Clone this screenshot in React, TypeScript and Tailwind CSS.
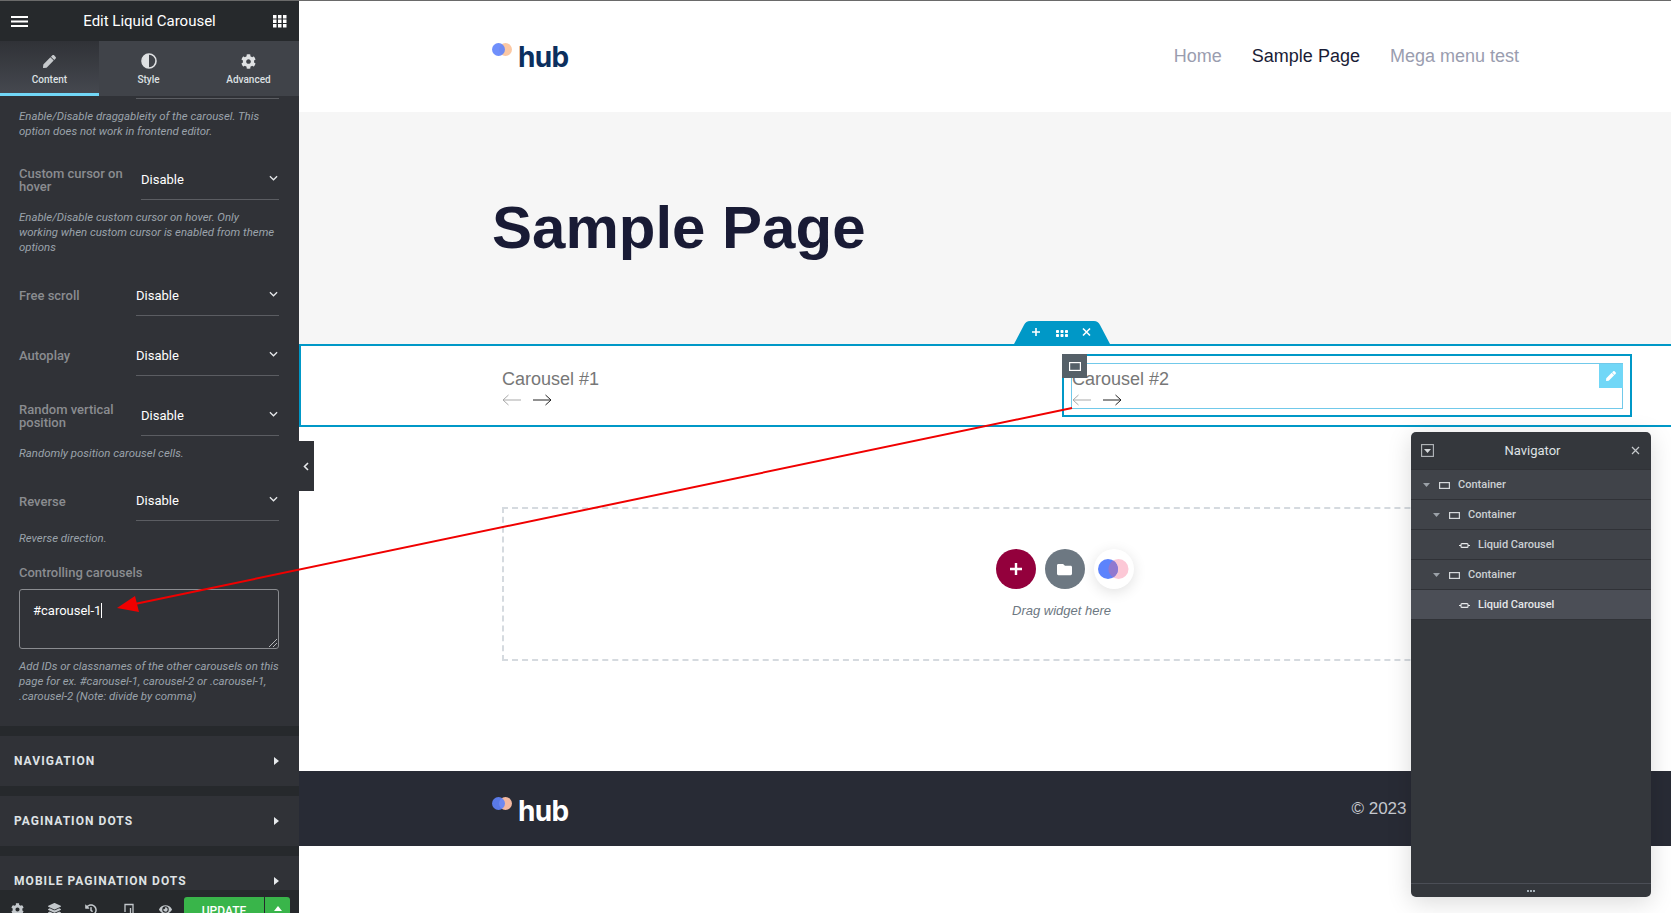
import React from "react";
import { FaPen, FaCog, FaLayerGroup, FaHistory, FaEye, FaFolder } from "react-icons/fa";

const Desc = ({ children, className = "" }: { children: React.ReactNode; className?: string }) => (
  <p className={`mx-[19px] shrink-0 text-[11.4px] leading-[15px] italic text-[#9ba3ab] ${className}`}>{children}</p>
);

const Chevron = () => (
  <svg width="9" height="6" viewBox="0 0 10 6" className="mb-[3px]" fill="none" stroke="#e6e8ea" strokeWidth="1.4">
    <path d="M1 1l4 4 4-4" />
  </svg>
);

const Row = ({ label, start, mt, lift }: { label: React.ReactNode; start: number; mt: string; lift?: boolean }) => (
  <div className={`flex h-10 shrink-0 pl-[19px] pr-5 items-center ${mt}`}>
    <div className={`shrink-0 text-[13px] leading-[13px] font-medium text-[#8a8c90] ${lift ? "pb-[2px]" : ""}`} style={{ width: start - 19 }}>{label}</div>
    <div className="flex-1 h-full border-b border-[#5b5d62] flex items-center justify-between pr-px">
      <span className="text-[13px] text-white">Disable</span>
      <Chevron />
    </div>
  </div>
);

const Accordion = ({ title, last }: { title: string; last?: boolean }) => (
  <>
    <div className="h-[10px] bg-[#26292c] shrink-0" />
    <div className={`${last ? "h-[34px] pt-[18px] items-start" : "h-[50px] items-center"} shrink-0 pl-[14px] pr-[20px] flex justify-between`}>
      <span className="text-[12px] leading-[15px] font-bold tracking-[1.05px] text-[#dfe2e5]">{title}</span>
      <svg width="5" height="8" viewBox="0 0 5 8" className={last ? "mt-[3px]" : ""}><path d="M0 0l5 4-5 4z" fill="#e6e9ec" /></svg>
    </div>
  </>
);

const Tab = ({ icon, label, active, className }: { icon: React.ReactNode; label: string; active?: boolean; className: string }) => (
  <div className={`${className} h-full flex flex-col items-center pt-[12px] ${active ? "bg-gradient-to-b from-[#303237] to-[#45484f] border-b-[3px] border-[#71d7f7]" : ""}`}>
    <div className="h-[16px] flex items-center justify-center">{icon}</div>
    <span className="text-[10px] leading-[12px] mt-[5px] font-medium text-[#dde0e3]">{label}</span>
  </div>
);

const Logo = ({ color, second }: { color: string; second: string }) => (
  <div className="flex items-start">
    <svg width="20" height="13" viewBox="0 0 20 13" className="mt-[3px]">
      <circle cx="13.500" cy="6.500" r="6.500" fill={second} />
      <circle cx="6.500" cy="6.500" r="6.500" fill="#5f83fb" fillOpacity="0.9" />
    </svg>
    <span className="text-[28px] leading-[34px] font-bold tracking-[-0.7px] ml-[6px] font-['Inter',sans-serif]" style={{ color }}>hub</span>
  </div>
);

const Arrows = () => (
  <div className="flex gap-[10px] mt-[5px]">
    <svg width="20" height="12" viewBox="0 0 20 12" fill="none" stroke="#a9a9a9" strokeWidth="1"><path d="M19 6H1M6.500 1L1 6l5.500 5" /></svg>
    <svg width="20" height="12" viewBox="0 0 20 12" fill="none" stroke="#222" strokeWidth="1"><path d="M1 6h18M13.500 1L19 6l-5.500 5" /></svg>
  </div>
);

const NavRow = ({ depth, label, kind, selected }: { depth: number; label: string; kind: "c" | "w"; selected?: boolean }) => (
  <div className={`h-[30px] shrink-0 pt-px border-b border-[#303237] flex items-center text-[11px] font-medium ${selected ? "bg-[#4b4e56] text-[#e6e8ea]" : "bg-[#404349] text-[#ccd0d4]"}`} style={{ paddingLeft: 12 + depth * 10 }}>
    {kind === "c" ? (
      <>
        <svg width="7" height="4" viewBox="0 0 7 4" className="mr-[9px]"><path d="M0 0h7L3.500 4z" fill="#9ba1a8" /></svg>
        <svg width="11" height="7" viewBox="0 0 11 7" fill="none" stroke="#d5d8db" strokeWidth="1.200" className="mr-[8px]"><rect x="0.600" y="0.600" width="9.800" height="5.800" /></svg>
      </>
    ) : (
      <svg width="11" height="5" viewBox="0 0 11 5" fill="none" stroke="#e6e8ea" strokeWidth="1.100" className="ml-[16px] mr-[8px]"><rect x="2" y="0.600" width="7" height="3.800" rx="1" /><path d="M0 2.500h2M9 2.500h2" /></svg>
    )}
    <span>{label}</span>
  </div>
);

export default function App() {
  return (
    <div className="w-full h-screen overflow-hidden relative flex flex-col bg-white font-['Liberation_Sans',sans-serif]">
      <div className="h-px bg-[#6a6a6a] shrink-0" />
      <div className="flex flex-1 min-h-0">
        {/* Editor panel */}
        <aside className="w-[299px] shrink-0 h-full bg-[#303237] flex flex-col font-['Roboto',sans-serif] overflow-hidden">
          <header className="h-10 shrink-0 bg-[#26292c] flex items-center justify-between pl-[11px] pr-[12px]">
            <svg width="17" height="11" viewBox="0 0 17 11" fill="#fff"><rect width="17" height="2" /><rect y="4.500" width="17" height="2" /><rect y="9" width="17" height="2" /></svg>
            <span className="text-[15px] text-white mr-[2px]">Edit Liquid Carousel</span>
            <svg width="14" height="13" viewBox="0 0 14 13" fill="#fff">
              {[0, 5, 10].map((x) => [0, 4.5, 9].map((y) => <rect key={`${x}-${y}`} x={x} y={y} width="3.500" height="3.500" />))}
            </svg>
          </header>
          <nav className="h-[55px] shrink-0 bg-[#404349] flex">
            <Tab active className="w-[99px]" label="Content" icon={<FaPen className="text-[13px] text-[#c6c9cc]" />} />
            <Tab className="w-[99px]" label="Style" icon={
              <svg width="16" height="16" viewBox="0 0 16 16"><circle cx="8" cy="8" r="7" fill="none" stroke="#dfe1e3" strokeWidth="1.600" /><path d="M8 1a7 7 0 0 0 0 14z" fill="#dfe1e3" /></svg>
            } />
            <Tab className="flex-1" label="Advanced" icon={<FaCog className="text-[15px] text-[#dfe1e3]" />} />
          </nav>

          <div className="ml-[136px] w-[143px] h-px mt-[2px] bg-[#5b5d62] shrink-0" />
          <Desc className="mt-[10px]">Enable/Disable draggableity of the carousel. This option does not work in frontend editor.</Desc>
          <Row mt="mt-[21px]" start={141} label={<>Custom cursor on<br />hover</>} />
          <Desc className="mt-[10px]">Enable/Disable custom cursor on hover. Only<br />working when custom cursor is enabled from theme<br />options</Desc>
          <Row mt="mt-[21px]" start={136} lift label="Free scroll" />
          <Row mt="mt-[20px]" start={136} lift label="Autoplay" />
          <Row mt="mt-[20px]" start={141} label={<>Random vertical<br />position</>} />
          <Desc className="mt-[10px]">Randomly position carousel cells.</Desc>
          <Row mt="mt-[20px]" start={136} label="Reverse" />
          <Desc className="mt-[10px]">Reverse direction.</Desc>
          <div className="mt-[19px] mx-[19px] shrink-0 text-[13px] leading-[15px] font-medium text-[#8a8c90]">Controlling carousels</div>
          <div className="relative mt-[9px] ml-[19px] mr-[20px] h-[60px] shrink-0 border border-[#8a8c90] rounded-[3px] pl-[13px] pt-[13px] text-[13px] leading-[16px] text-white">
            #carousel-1<span className="inline-block w-px h-[15px] bg-white align-[-3px]" />
            <svg width="8" height="8" viewBox="0 0 8 8" className="absolute right-px bottom-px" stroke="#b5b7ba" strokeWidth="1"><path d="M0 8l8-8M4 8l4-4" /></svg>
          </div>
          <Desc className="mt-[10px]">Add IDs or classnames of the other carousels on this page for ex. #carousel-1, carousel-2 or .carousel-1, .carousel-2 (Note: divide by comma)</Desc>
          <div className="mt-[22px] flex flex-col shrink-0">
            <Accordion title="NAVIGATION" />
            <Accordion title="PAGINATION DOTS" />
            <Accordion title="MOBILE PAGINATION DOTS" last />
          </div>
          <footer className="flex-1 bg-[#26292c] flex items-start pt-[7px]">
            <div className="flex items-center pt-[6px] w-[184px] pl-[11px] text-[#c3c8cc]">
              <FaCog className="text-[13px] mr-[24px]" />
              <FaLayerGroup className="text-[13px] mr-[24px]" />
              <FaHistory className="text-[12px] mr-[25px]" />
              <svg width="13" height="13" viewBox="0 0 13 13" fill="none" stroke="currentColor" strokeWidth="1.300" className="mr-[24px]"><path d="M1 11h7M3 9V1.500h8V11H8.500V5" /></svg>
              <FaEye className="text-[13px]" />
            </div>
            <div className="w-[80px] h-[30px] bg-[#39b54a] rounded-tl-[3px] flex justify-center pt-[5px] text-[12px] font-medium text-white">UPDATE</div>
            <div className="w-[25px] ml-px h-[30px] bg-[#39b54a] rounded-tr-[3px] flex justify-center pt-[9px]">
              <svg width="8" height="5" viewBox="0 0 8 5"><path d="M0 5l4-5 4 5z" fill="#fff" /></svg>
            </div>
          </footer>
        </aside>

        {/* Page preview */}
        <main className="flex-1 min-w-0 flex flex-col relative">
          <div className="h-[111px] shrink-0 flex items-center justify-between pl-[193px] pr-[152px]">
            <Logo color="#0c2f5e" second="#fbc8a4" />
            <div className="flex gap-[30px] text-[18px] text-[#9a9daf]">
              <span>Home</span>
              <span className="text-[#1a1c36]">Sample Page</span>
              <span>Mega menu test</span>
            </div>
          </div>
          <div className="h-[232px] shrink-0 bg-[#f6f6f6] pl-[193px] pt-[80px]">
            <h1 className="text-[60px] leading-[72px] font-bold text-[#191b35]">Sample Page</h1>
          </div>

          {/* Edited section */}
          <section className="relative h-[83px] shrink-0 border-2 border-r-0 border-[#0098c7] flex pl-[191px] pt-[23px]">
            <div className="w-[571px] pl-[10px]">
              <div className="text-[18px] leading-[20px] text-[#777]">Carousel #1</div>
              <Arrows />
            </div>
            <div className="pl-[9px]">
              <div className="text-[18px] leading-[20px] text-[#777]">Carousel #2</div>
              <Arrows />
            </div>
            {/* section handle */}
            <div className="absolute left-[713px] top-[-25px] w-[97px] h-[23px]">
              <svg width="97" height="23" viewBox="0 0 97 23" className="absolute inset-0"><path d="M0 23L10 4Q12 0 16 0H80Q84 0 86 4L96 23z" fill="#0098c7" /></svg>
              <svg width="97" height="23" viewBox="0 0 97 23" className="absolute inset-0" stroke="#fff" fill="#fff">
                <path d="M22 7v8M18 11h8" strokeWidth="1.600" />
                <g stroke="none">
                  {[42, 46.5, 51].map((x) => [9, 13].map((y) => <rect key={`${x}${y}`} x={x} y={y} width="3" height="3" rx="0.800" />))}
                </g>
                <path d="M69 7.500l7 7M76 7.500l-7 7" strokeWidth="1.600" />
              </svg>
            </div>
            {/* container outline */}
            <div className="absolute left-[761px] top-[8px] w-[570px] h-[63px] border-2 border-[#0098c7]" />
            <div className="absolute left-[770px] top-[17px] w-[552px] h-[46px] border border-[#71c9ea]" />
            <div className="absolute left-[761px] top-[8px] w-[25px] h-[24px] bg-[#556068] flex items-center justify-center">
              <svg width="12" height="9" viewBox="0 0 12 9" fill="none" stroke="#fff" strokeWidth="1.200"><rect x="0.600" y="0.600" width="10.800" height="7.800" /></svg>
            </div>
            <div className="absolute left-[1298px] top-[18px] w-6 h-6 bg-[#71d7f7] flex items-center justify-center">
              <FaPen className="text-[10px] text-white" />
            </div>
          </section>

          <div className="h-[344px] shrink-0 pl-[203px] pr-[50px] pt-[80px]">
            <div className="h-[154px] border-2 border-dashed border-[#d5dadf] flex flex-col items-center pt-[40px]">
              <div className="flex gap-[9px] ml-[6px]">
                <div className="w-10 h-10 rounded-full bg-[#93003c] flex items-center justify-center">
                  <svg width="14" height="14" viewBox="0 0 14 14" stroke="#fff" strokeWidth="2.400"><path d="M7 1v12M1 7h12" /></svg>
                </div>
                <div className="w-10 h-10 rounded-full bg-[#6d7882] flex items-center justify-center">
                  <FaFolder className="text-[15px] text-white" />
                </div>
                <div className="w-10 h-10 rounded-full bg-white shadow-[0_3px_14px_rgba(0,0,0,0.12)] flex items-center justify-center">
                  <svg width="31" height="20" viewBox="0 0 31 20"><circle cx="20.500" cy="10" r="10" fill="#fcc8d6" /><circle cx="10" cy="10" r="10" fill="#5c83fc" /><path d="M15.200 1.500a10 10 0 0 1 0 17a10 10 0 0 1 0-17z" fill="#9178cf" /></svg>
                </div>
              </div>
              <span className="mt-[13px] text-[13px] leading-[18px] italic text-[#6d7882]">Drag widget here</span>
            </div>
          </div>

          <footer className="h-[75px] shrink-0 bg-[#282b35] flex items-center pl-[193px] pt-[4px]">
            <Logo color="#fff" second="#f4b8a0" />
            <span className="ml-[783px] pb-[4px] text-[17px] text-[#c5c8ce] whitespace-nowrap">© 2023 Liquid Themes</span>
          </footer>

          {/* Panel toggle */}
          <div className="absolute left-0 top-[440px] w-[15px] h-[50px] bg-[#303237] flex items-center justify-center pr-px">
            <svg width="6" height="9" viewBox="0 0 6 9" fill="none" stroke="#e6e8ea" strokeWidth="1.600"><path d="M5 1L1.500 4.500 5 8" /></svg>
          </div>
        </main>
      </div>

      {/* Navigator window */}
      <div className="absolute left-[1411px] top-[432px] w-[240px] h-[465px] rounded-[5px] bg-[#34373c] shadow-[0_5px_25px_rgba(0,0,0,0.15)] flex flex-col font-['Roboto',sans-serif] overflow-hidden">
        <div className="h-[38px] shrink-0 border-b border-[#303237] flex items-center justify-between pl-[10px] pr-[11px]">
          <svg width="13" height="13" viewBox="0 0 13 13" fill="none"><rect x="0.600" y="0.600" width="11.800" height="11.800" stroke="#b5b9bd" strokeWidth="1.100" /><path d="M3 5h7L6.500 9z" fill="#d5d8db" /></svg>
          <span className="text-[13px] text-[#dfe2e5]">Navigator</span>
          <svg width="9" height="9" viewBox="0 0 9 9" stroke="#c6c9cc" strokeWidth="1.200"><path d="M1 1l7 7M8 1l-7 7" /></svg>
        </div>
        <NavRow depth={0} kind="c" label="Container" />
        <NavRow depth={1} kind="c" label="Container" />
        <NavRow depth={2} kind="w" label="Liquid Carousel" />
        <NavRow depth={1} kind="c" label="Container" />
        <NavRow depth={2} kind="w" label="Liquid Carousel" selected />
        <div className="flex-1" />
        <div className="h-[14px] shrink-0 border-t border-[#4b4e56] flex items-center justify-center gap-px">
          <i className="w-[2px] h-[2px] bg-[#a4afb7]" /><i className="w-[2px] h-[2px] bg-[#a4afb7]" /><i className="w-[2px] h-[2px] bg-[#a4afb7]" />
        </div>
      </div>

      {/* Red annotation arrow */}
      <svg className="absolute left-0 top-0 pointer-events-none" width="1671" height="913" viewBox="0 0 1671 913">
        <path d="M1072 408L130 605" stroke="#f00000" strokeWidth="2" fill="none" />
        <path d="M117 608L135 596L139 612z" fill="#f00000" />
      </svg>
    </div>
  );
}
